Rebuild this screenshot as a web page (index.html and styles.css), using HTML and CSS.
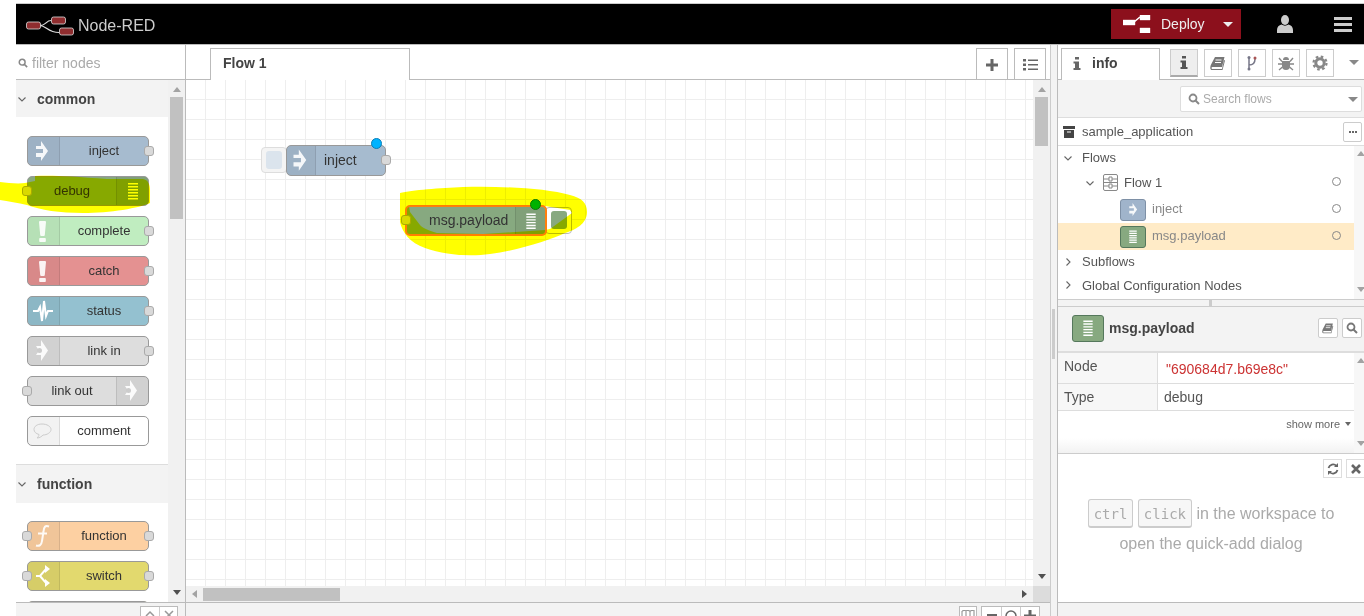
FILE: index.html
```html
<!DOCTYPE html>
<html lang="en">
<head>
    <meta charset="UTF-8">
    <title>Node-RED</title>
    <link rel="stylesheet" href="styles.css">
</head>
<body>
    <svg class="defs" width="0" height="0">
        <symbol id="i-inject" viewBox="0 0 32 28"><path d="M8 9h5V4l7 10-7 10v-4H8v-4h7v-4H8z" fill="#fff" fill-opacity=".9"/></symbol>
        <symbol id="i-debug" viewBox="0 0 32 28"><path d="M11 6h10v1.500H11zM11 9h10v1.500H11zM11 12h10v1.500H11zM11 15h10v1.500H11zM11 18h10v1.500H11zM11 21h10v1.500H11z" fill="#fff"/></symbol>
        <symbol id="i-alert" viewBox="0 0 32 28"><path d="M11 5q0-1 1-1h5q1 0 1 1l-1.200 13q0 1-1 1h-2.600q-1 0-1-1zM12 21h5q.8 0 .8 .8v2.400q0 .8-.8 .8h-5q-.8 0-.8-.8v-2.400q0-.8 .8-.8z" fill="#fff" fill-opacity=".9"/></symbol>
        <symbol id="i-status" viewBox="0 0 32 28"><path d="M5 14h5l2-4 2 14 2-20 2 15 2-5h5" fill="none" stroke="#fff" stroke-width="2"/></symbol>
        <symbol id="i-link" viewBox="0 0 32 28"><path d="M13 3l7 10.500L13 24v-6H8l3-4.500L8 9h5z" fill="#fff" fill-opacity=".9"/><circle cx="11.500" cy="13.500" r="2.500" fill="#ccc"/></symbol>
        <symbol id="i-comment" viewBox="0 0 32 28"><path d="M14 7c5 0 9 2.500 9 5.500S19 18 15 18c-1 1-3 3-6 3 1-1 2-2 2-3.500-3-.8-5-2.700-5-5C6 9.500 9 7 14 7z" fill="none" stroke="#ccc" stroke-width="1"/></symbol>
        <symbol id="i-func" viewBox="0 0 32 28"><path d="M21 4.500c-4-1.500-5 .5-5.500 5L14 19c-.5 4-2.500 5.500-6 4.500M10 11.500h9" fill="none" stroke="#fff" stroke-opacity=".9" stroke-width="2"/></symbol>
        <symbol id="i-switch" viewBox="0 0 32 28"><path d="M8 14h4l6-7h2M12 14l6 7h2" fill="none" stroke="#fff" stroke-width="2"/><path d="M17 3l5 4-5 4zM17 17l5 4-5 4z" fill="#fff"/></symbol>
        <symbol id="i-search" viewBox="0 0 12 12"><circle cx="5" cy="5" r="3.500" fill="none" stroke="currentColor" stroke-width="1.800"/><path d="M7.500 7.500L11 11" stroke="currentColor" stroke-width="2"/></symbol>
        <symbol id="i-book" viewBox="0 0 16 16"><path d="M5 2h9.500l-2.500 10H2.500C1.500 12 1 13 2 14h10l2-9 1 .5L12.500 15H2C0 15 0 12.500 .8 10z" fill="currentColor"/><path d="M5.500 5h6M5 7.500h6" stroke="#fff" stroke-width="1"/></symbol>
        <symbol id="i-chev-down" viewBox="0 0 10 10"><path d="M1.500 3.500L5 7l3.500-3.500" fill="none" stroke="currentColor" stroke-width="1.100"/></symbol>
        <symbol id="i-chev-right" viewBox="0 0 10 10"><path d="M3.500 1.500L7 5 3.500 8.500" fill="none" stroke="currentColor" stroke-width="1.100"/></symbol>
    </svg>

    <div class="app">
        <header class="header">
            <svg class="logo" width="48" height="20" viewBox="0 0 48 20">
                <path d="M14 9.500c6 0 6-5 11-5M14 9.500c6 0 8 7 19 7" fill="none" stroke="#ddd" stroke-width="1.200"/>
                <rect x=".5" y="6" width="14" height="7" rx="2" fill="#8f2d2f" stroke="#ddd" stroke-width=".8"/>
                <rect x="25.500" y="1" width="14" height="7" rx="2" fill="#8f2d2f" stroke="#ddd" stroke-width=".8"/>
                <rect x="33.500" y="12" width="14" height="7" rx="2" fill="#8f2d2f" stroke="#ddd" stroke-width=".8"/>
            </svg>
            <span class="brand">Node-RED</span>
            <div class="header-right">
                <div class="deploy">
                    <svg width="28" height="18" viewBox="0 0 28 18"><path d="M0 5h12v5H0zM17 0h10v5H17zM17 13h10v5H17zM12 6l5-4" fill="#fff" stroke="#fff" stroke-width=".4"/><path d="M11 7l6-5" stroke="#fff" stroke-width="1.500"/></svg>
                    <span class="deploy-label">Deploy</span>
                    <span class="caret caret-light"></span>
                </div>
                <svg class="user" width="16" height="18" viewBox="0 0 16 18"><ellipse cx="8" cy="5" rx="4" ry="5" fill="#ccc"/><path d="M0 18v-3c0-3 2-5 4.500-5.500 2 1.500 5 1.500 7 0C14 10 16 12 16 15v3z" fill="#ccc"/></svg>
                <div class="burger"><i></i><i></i><i></i></div>
            </div>
        </header>

        <div class="main">
            <aside class="palette">
                <div class="filter">
                    <svg class="filter-icon" width="10" height="10"><use href="#i-search"/></svg>
                    <span>filter nodes</span>
                </div>
                <div class="palette-body">
                    <div class="palette-list">
                        <div class="cat-head">
                            <svg width="10" height="10"><use href="#i-chev-down"/></svg>
                            <span>common</span>
                        </div>
                        <div class="cat-nodes">
                            <div class="node c-inject"><span class="pane"><svg width="32" height="28"><use href="#i-inject"/></svg></span><span class="label">inject</span><i class="port port-r"></i></div>
                            <div class="node c-debug"><i class="port port-l"></i><span class="label">debug</span><span class="pane pane-r"><svg width="32" height="28"><use href="#i-debug"/></svg></span></div>
                            <div class="node c-complete"><span class="pane"><svg width="32" height="28"><use href="#i-alert"/></svg></span><span class="label">complete</span><i class="port port-r"></i></div>
                            <div class="node c-catch"><span class="pane"><svg width="32" height="28"><use href="#i-alert"/></svg></span><span class="label">catch</span><i class="port port-r"></i></div>
                            <div class="node c-status"><span class="pane"><svg width="32" height="28"><use href="#i-status"/></svg></span><span class="label">status</span><i class="port port-r"></i></div>
                            <div class="node c-link"><span class="pane"><svg width="32" height="28"><use href="#i-link"/></svg></span><span class="label">link in</span><i class="port port-r"></i></div>
                            <div class="node c-link"><i class="port port-l"></i><span class="label">link out</span><span class="pane pane-r"><svg width="32" height="28"><use href="#i-link"/></svg></span></div>
                            <div class="node c-comment"><span class="pane"><svg width="32" height="28"><use href="#i-comment"/></svg></span><span class="label">comment</span></div>
                        </div>
                        <div class="cat-head cat-ruled">
                            <svg width="10" height="10"><use href="#i-chev-down"/></svg>
                            <span>function</span>
                        </div>
                        <div class="cat-nodes cat-nodes-fn">
                            <div class="node c-function"><i class="port port-l"></i><span class="pane"><svg width="32" height="28"><use href="#i-func"/></svg></span><span class="label">function</span><i class="port port-r"></i></div>
                            <div class="node c-switch"><i class="port port-l"></i><span class="pane"><svg width="32" height="28"><use href="#i-switch"/></svg></span><span class="label">switch</span><i class="port port-r"></i></div>
                            <div class="node c-switch"></div>
                        </div>
                    </div>
                    <div class="vscroll palette-scroll">
                        <i class="arrow arrow-up"></i>
                        <i class="thumb thumb-palette"></i>
                        <span class="grow"></span>
                        <i class="arrow arrow-down"></i>
                    </div>
                </div>
                <div class="bar-foot palette-foot">
                    <div class="mini-group">
                        <span class="mini">
                            <svg width="10" height="8" viewBox="0 0 10 8"><path d="M1 6l4-4 4 4" fill="none" stroke="#999" stroke-width="1.500"/></svg>
                        </span>
                        <span class="mini">
                            <svg width="10" height="8" viewBox="0 0 10 8"><path d="M1 1l8 8M9 1l-8 8" fill="none" stroke="#999" stroke-width="1.500"/></svg>
                        </span>
                    </div>
                </div>
            </aside>

            <section class="workspace">
                <div class="ws-tabs">
                    <div class="ws-tab">Flow 1</div>
                    <div class="ws-actions">
                        <span class="ws-btn"><svg width="12" height="12" viewBox="0 0 12 12"><path d="M4.500 0h3v4.500H12v3H7.500V12h-3V7.500H0v-3h4.500z" fill="#666"/></svg></span>
                        <span class="ws-btn"><svg width="15" height="12" viewBox="0 0 15 12"><path d="M0 0h3v2.500H0zM5 .5h10v1.500H5zM0 4.500h3V7H0zM5 5h10v1.500H5zM0 9h3v2.500H0zM5 9.500h10V11H5z" fill="#666"/></svg></span>
                    </div>
                </div>
                <div class="ws-mid">
                    <div class="ws-col">
                        <div class="canvas">
                            <div class="flow-btn btn-inject"><i></i></div>
                            <div class="flow-node flow-inject">
                                <span class="pane"><svg><use href="#i-inject"/></svg></span>
                                <span class="flow-label">inject</span>
                                <i class="port port-r"></i>
                                <i class="dot dot-blue"></i>
                            </div>
                            <div class="flow-btn btn-debug"><i></i></div>
                            <div class="flow-node flow-debug">
                                <i class="port port-l"></i>
                                <span class="flow-label">msg.payload</span>
                                <span class="pane pane-r"><svg width="30" height="28" viewBox="0 0 32 28"><use href="#i-debug"/></svg></span>
                                <i class="dot dot-green"></i>
                            </div>
                        </div>
                        <div class="hscroll">
                            <i class="arrow arrow-left"></i>
                            <i class="thumb thumb-h"></i>
                            <span class="grow"></span>
                            <i class="arrow arrow-right"></i>
                        </div>
                    </div>
                    <div class="ws-vcol">
                        <div class="vscroll ws-scroll">
                            <i class="arrow arrow-up"></i>
                            <i class="thumb thumb-ws"></i>
                            <span class="grow"></span>
                            <i class="arrow arrow-down"></i>
                        </div>
                        <div class="corner"></div>
                    </div>
                </div>
                <div class="bar-foot ws-foot">
                    <span class="mini mini-map">
                        <svg width="14" height="10" viewBox="0 0 14 10"><path d="M1 1l4-1 4 1 4-1v9H1zM5 0v9M9 1v8" fill="none" stroke="#888"/></svg>
                    </span>
                    <div class="mini-group">
                        <span class="mini"><svg width="10" height="10"><path d="M0 4h10v3H0z" fill="#666"/></svg></span>
                        <span class="mini"><svg width="12" height="12"><circle cx="6" cy="6" r="5" fill="none" stroke="#666" stroke-width="1.500"/></svg></span>
                        <span class="mini"><svg width="12" height="12" viewBox="0 0 12 12"><path d="M4.500 0h3v4.500H12v3H7.500V12h-3V7.500H0v-3h4.500z" fill="#666"/></svg></span>
                    </div>
                </div>
            </section>

            <div class="splitter"><i></i></div>

            <aside class="sidebar">
                <div class="side-tabs">
                    <div class="side-tab">
                        <svg width="8" height="13" viewBox="0 0 8 13"><path d="M2 0h4v2.500H2zM.5 4.500H6V11h1.500v2h-7v-2H2V6.500H.5z" fill="#666"/></svg>
                        <span>info</span>
                    </div>
                    <div class="side-icons">
                        <span class="side-btn side-btn-on"><svg width="8" height="13" viewBox="0 0 8 13"><path d="M2 0h4v2.500H2zM.5 4.500H6V11h1.500v2h-7v-2H2V6.500H.5z" fill="#555"/></svg></span>
                        <span class="side-btn"><svg width="16" height="16"><use href="#i-book"/></svg></span>
                        <span class="side-btn"><svg width="10" height="16" viewBox="0 0 10 16"><path d="M2 3v11M2 10c4 0 6-2 6-6" fill="none" stroke="#778" stroke-width="1.500"/><circle cx="2" cy="2.500" r="1.500" fill="#778"/><circle cx="8" cy="3" r="1.500" fill="#a55"/><circle cx="2" cy="14" r="1.500" fill="#778"/></svg></span>
                        <span class="side-btn"><svg width="16" height="16" viewBox="0 0 16 16"><path d="M5 5a3 3 0 0 1 6 0z" fill="#888"/><path d="M4 6h8v5a4 4 0 0 1-8 0z" fill="#888"/><path d="M1 3l3 3.500M15 3l-3 3.500M0 9h4M12 9h4M1 15l3.500-3M15 15l-3.500-3" stroke="#888" stroke-width="1.400"/></svg></span>
                        <span class="side-btn"><svg width="16" height="16" viewBox="0 0 16 16"><circle cx="8" cy="8" r="4.200" fill="none" stroke="#888" stroke-width="3"/><circle cx="8" cy="8" r="6.500" fill="none" stroke="#888" stroke-width="2.200" stroke-dasharray="2.600 2.500"/></svg></span>
                        <i class="caret caret-side"></i>
                    </div>
                </div>
                <div class="search-row">
                    <div class="search-box">
                        <svg class="search-icon" width="12" height="12"><use href="#i-search"/></svg>
                        <span class="search-text">Search flows</span>
                        <i class="caret caret-search"></i>
                    </div>
                </div>
                <div class="project-row">
                    <svg width="12" height="12" viewBox="0 0 12 12"><path d="M0 0h12v3H0zM1 4h10v8H1z" fill="#444"/><path d="M4 5.500h4v1H4z" fill="#fff"/></svg>
                    <span class="project-name">sample_application</span>
                    <span class="dots-btn"><i></i><i></i><i></i></span>
                </div>
                <div class="tree-wrap">
                    <div class="tree">
                        <div class="tree-row row-top">
                            <svg class="chev" width="10" height="10"><use href="#i-chev-down"/></svg>
                            <span>Flows</span>
                        </div>
                        <div class="tree-row row-flow">
                            <svg class="chev" width="10" height="10"><use href="#i-chev-down"/></svg>
                            <svg class="flow-icon" width="15" height="17" viewBox="0 0 15 17"><rect x=".5" y=".5" width="14" height="16" rx="1.500" fill="#fff" stroke="#888"/><path d="M1 5h5M1 12h5M6 3h3v4H6zM6 10h3v4H6zM9 5h5M9 12h5M1 8.500h13" fill="none" stroke="#888"/></svg>
                            <span>Flow 1</span>
                            <i class="ring"></i>
                        </div>
                        <div class="tree-row row-node">
                            <span class="tree-icon t-inject"><svg class="shift-inject" width="24" height="21"><use href="#i-inject"/></svg></span>
                            <span class="muted">inject</span>
                            <i class="ring"></i>
                        </div>
                        <div class="tree-row row-node row-sel">
                            <span class="tree-icon t-debug"><svg width="24" height="21"><use href="#i-debug"/></svg></span>
                            <span class="muted">msg.payload</span>
                            <i class="ring"></i>
                        </div>
                        <div class="tree-row row-top">
                            <svg class="chev" width="10" height="10"><use href="#i-chev-right"/></svg>
                            <span>Subflows</span>
                        </div>
                        <div class="tree-row row-top row-last">
                            <svg class="chev" width="10" height="10"><use href="#i-chev-right"/></svg>
                            <span>Global Configuration Nodes</span>
                        </div>
                    </div>
                    <div class="side-scroll">
                        <i class="arrow arrow-up"></i>
                        <span class="grow"></span>
                        <i class="arrow arrow-down"></i>
                    </div>
                </div>
                <div class="side-split"><i></i></div>
                <div class="info-head">
                    <span class="info-icon"><svg width="30" height="26"><use href="#i-debug"/></svg></span>
                    <span class="info-title">msg.payload</span>
                    <div class="info-actions">
                        <span class="small-btn"><svg width="12" height="12"><use href="#i-book"/></svg></span>
                        <span class="small-btn"><svg width="12" height="12"><use href="#i-search"/></svg></span>
                    </div>
                </div>
                <div class="info-wrap">
                    <div class="info-body">
                        <div class="info-table">
                            <div class="prop prop-node"><span class="prop-key">Node</span><span class="prop-val val-red">"690684d7.b69e8c"</span></div>
                            <div class="prop prop-type"><span class="prop-key">Type</span><span class="prop-val">debug</span></div>
                        </div>
                        <div class="show-more">show more <i class="caret caret-more"></i></div>
                    </div>
                    <div class="side-scroll">
                        <i class="arrow arrow-up"></i>
                        <span class="grow"></span>
                        <i class="arrow arrow-down"></i>
                    </div>
                </div>
                <div class="tips">
                    <div class="tips-actions">
                        <span class="tip-btn"><svg width="12" height="12" viewBox="0 0 12 12"><path d="M1.500 5a4.700 4.700 0 0 1 8-2M10.500 7a4.700 4.700 0 0 1-8 2" fill="none" stroke="#666" stroke-width="1.800"/><path d="M11 0v4H7zM1 12V8h4z" fill="#666"/></svg></span>
                        <span class="tip-btn"><svg width="10" height="10" viewBox="0 0 10 10"><path d="M1 1l8 8M9 1l-8 8" stroke="#666" stroke-width="2.600"/></svg></span>
                    </div>
                    <p class="tip-text"><kbd>ctrl</kbd> <kbd>click</kbd> in the workspace to<br>open the quick-add dialog</p>
                </div>
                <div class="bar-foot side-foot"></div>
            </aside>
        </div>
    </div>

    <!-- marker scribble over the screenshot -->
    <svg class="paint" width="1364" height="616" viewBox="0 0 1364 616">
        <path d="M0 182C8 183 18 184 25 183L35 181 35 176C50 175 70 176 107 179L143 179C148 180 150 184 150 190L150 203C140 208 110 213 83 213 60 213 40 210 27 205 18 203 8 201 0 200z" fill="#ff0"/>
        <path fill-rule="evenodd" fill="#ff0" d="M400 193C412 190 440 188 463 187 500 186 545 188 570 195 582 198 587 203 587 212 587 224 575 230 565 233 550 240 520 250 490 254 470 257 445 255 425 248 410 243 402 232 400 222zM409 206L545 206 570 210 572 213 550 229 545 230 483 234 437 233C428 230 422 228 420 225L410 212z"/>
    </svg>
</body>
</html>
```

FILE: styles.css
```css
* {
    box-sizing: border-box;
}

html, body {
    margin: 0;
    height: 616px;
    overflow: hidden;
}

body {
    background: white;
    padding: 4px 0 0 16px;
    font-family: "Liberation Sans", Arial, sans-serif;
    color: #555;
    position: relative;
}

i {
    display: block;
    font-style: normal;
}

svg {
    display: block;
}

.defs {
    position: absolute;
}

.grow {
    flex: 1;
}

.app {
    width: 1348px;
    height: 612px;
    display: flex;
    flex-direction: column;
    box-shadow: 0 -1px 0 #ccc;
}

/* header */
.header {
    height: 41px;
    flex: none;
    background: #000;
    border-bottom: 1px solid #bbb;
    display: flex;
    align-items: center;
    padding-left: 10px;
    color: #ccc;
}

.logo {
    margin-top: 4px;
}

.brand {
    font-size: 16px;
    margin-left: 4px;
    position: relative;
    top: 2px;
}

.header-right {
    margin-left: auto;
    display: flex;
    align-items: center;
}

.deploy {
    width: 130px;
    height: 30px;
    background: #8c101c;
    display: flex;
    align-items: center;
    padding-left: 12px;
    color: #eee;
    font-size: 14px;
}

.deploy-label {
    margin-left: 10px;
}

.caret {
    width: 0;
    height: 0;
    border-left: 5px solid transparent;
    border-right: 5px solid transparent;
    border-top: 5px solid #888;
}

.caret-light {
    border-top-color: #eee;
    margin-left: 18px;
}

.user {
    margin-left: 36px;
}

.burger {
    width: 18px;
    margin-left: 41px;
    margin-right: 12px;
    display: flex;
    flex-direction: column;
    gap: 3px;
}

.burger i {
    height: 3px;
    background: #ccc;
}

.main {
    flex: 1;
    display: flex;
    min-height: 0;
}

/* palette */
.palette {
    width: 170px;
    flex: none;
    display: flex;
    flex-direction: column;
    border-right: 1px solid #bbb;
}

.filter {
    height: 35px;
    flex: none;
    border-bottom: 1px solid #bbb;
    display: flex;
    align-items: center;
    padding: 2px 0 0 2px;
    font-size: 14px;
    color: #aaa;
}

.filter-icon {
    color: #888;
    margin-right: 4px;
}

.palette-body {
    flex: 1;
    display: flex;
    min-height: 0;
}

.palette-list {
    width: 152px;
    flex: none;
    overflow: hidden;
}

.cat-head {
    height: 37px;
    background: #f3f3f3;
    display: flex;
    align-items: center;
    padding-left: 1px;
    font-size: 14px;
    font-weight: bold;
    color: #444;
}

.cat-head svg {
    color: #666;
    margin-right: 10px;
}

.cat-ruled {
    height: 39px;
    border-top: 1px solid #ddd;
}

.cat-nodes {
    display: flex;
    flex-direction: column;
    gap: 10px;
    padding: 19px 0 18px 11px;
}

.cat-nodes-fn {
    padding-top: 18px;
}

.vscroll {
    display: flex;
    flex-direction: column;
    align-items: center;
    background: #f1f1f1;
}

.palette-scroll {
    width: 17px;
    flex: none;
}

.arrow {
    width: 0;
    height: 0;
    flex: none;
    border: 4px solid transparent;
}

.arrow-up {
    border-top: 0;
    border-bottom: 5px solid #a3a3a3;
    margin: 7px 0 5px;
}

.arrow-down {
    border-bottom: 0;
    border-top: 5px solid #505050;
    margin: 5px 0 7px;
}

.arrow-left {
    border-left: 0;
    border-right: 5px solid #a3a3a3;
    margin: 0 6px 0 6px;
}

.arrow-right {
    border-right: 0;
    border-left: 5px solid #505050;
    margin: 0 6px 0 5px;
}

.thumb {
    background: #c1c1c1;
}

.thumb-palette {
    width: 13px;
    height: 122px;
}

.thumb-ws {
    width: 13px;
    height: 49px;
}

.thumb-h {
    width: 137px;
    height: 13px;
}

.bar-foot {
    height: 14px;
    flex: none;
    background: #f3f3f3;
    border-top: 1px solid #bbb;
}

.palette-foot {
    display: flex;
    justify-content: flex-end;
    padding: 3px 7px 0 0;
}

.mini-group {
    display: flex;
    height: 24px;
    background: white;
    border: 1px solid #bbb;
}

.mini {
    width: 18px;
    height: 22px;
    display: flex;
    align-items: flex-start;
    justify-content: center;
    padding-top: 3px;
    background: white;
    border-left: 1px solid #ccc;
}

.mini:first-child {
    border-left: 0;
}

/* nodes */
.node {
    position: relative;
    width: 122px;
    height: 30px;
    flex: none;
    display: flex;
    border: 1px solid #999;
    border-radius: 5px;
    color: #333;
    font-size: 13px;
}

.pane {
    width: 32px;
    flex: none;
    background: rgba(0, 0, 0, 0.05);
    border-right: 1px solid rgba(0, 0, 0, 0.1);
    border-radius: 4px 0 0 4px;
}

.pane-r {
    border-right: 0;
    border-left: 1px solid rgba(0, 0, 0, 0.1);
    border-radius: 0 4px 4px 0;
}

.label {
    flex: 1;
    text-align: center;
    line-height: 28px;
}

.port {
    position: absolute;
    top: 9px;
    width: 10px;
    height: 10px;
    background: #d9d9d9;
    border: 1px solid #aaa;
    border-radius: 3px;
}

.port-r {
    right: -6px;
}

.port-l {
    left: -6px;
}

.c-inject { background: #a6bbcf; }
.c-debug { background: #87a980; }
.c-complete { background: #c0edc0; }
.c-catch { background: #e49191; }
.c-status { background: #94c1d0; }
.c-link { background: #ddd; }
.c-comment { background: white; }
.c-function { background: #fdd0a2; }
.c-switch { background: #e2d96e; }

/* workspace */
.workspace {
    width: 864px;
    flex: none;
    display: flex;
    flex-direction: column;
}

.ws-tabs {
    height: 35px;
    flex: none;
    border-bottom: 1px solid #bbb;
    display: flex;
    padding: 3px 4px 0 24px;
}

.ws-tab {
    width: 200px;
    height: 32px;
    background: white;
    border: 1px solid #bbb;
    border-bottom: 0;
    font-size: 14px;
    font-weight: bold;
    color: #444;
    line-height: 28px;
    padding-left: 12px;
}

.ws-actions {
    margin-left: auto;
    display: flex;
    gap: 6px;
}

.ws-btn {
    width: 32px;
    height: 32px;
    border: 1px solid #bbb;
    border-bottom: 0;
    display: flex;
    align-items: center;
    justify-content: center;
}

.ws-mid {
    flex: 1;
    display: flex;
    min-height: 0;
}

.ws-col {
    width: 847px;
    flex: none;
    display: flex;
    flex-direction: column;
}

.canvas {
    position: relative;
    flex: 1;
    background-color: white;
    background-image:
        linear-gradient(to right, transparent 19px, #eee 19px),
        linear-gradient(to bottom, transparent 19px, #eee 19px);
    background-size: 20px 20px;
}

.hscroll {
    height: 16px;
    flex: none;
    background: #f1f1f1;
    display: flex;
    align-items: center;
}

.ws-vcol {
    width: 17px;
    flex: none;
    display: flex;
    flex-direction: column;
}

.ws-scroll {
    flex: 1;
}

.corner {
    height: 16px;
    flex: none;
    background: #dcdcdc;
}

.ws-foot {
    display: flex;
    justify-content: flex-end;
    align-items: flex-start;
    padding: 3px 10px 0 0;
    gap: 4px;
}

.ws-foot .mini {
    width: 19px;
}

.ws-foot .mini-map {
    width: 18px;
    height: 24px;
    border: 1px solid #bbb;
}

/* nodes on the canvas */
.flow-node {
    position: absolute;
    height: 31px;
    display: flex;
    align-items: stretch;
    border: 1px solid #999;
    border-radius: 5px;
    font-size: 14px;
    color: #333;
}

.flow-inject {
    left: 100px;
    top: 65px;
    width: 100px;
    background: #a6bbcf;
}

.flow-inject .pane {
    width: 29px;
    overflow: hidden;
}

.flow-inject .pane svg {
    width: 34px;
    height: 30px;
    margin: -1px 0 0 -2px;
}

.flow-label {
    line-height: 29px;
    padding-left: 8px;
}

.flow-debug {
    left: 219px;
    top: 125px;
    width: 142px;
    background: #87a980;
    border: 2px solid #ff7f0e;
}

.flow-debug .flow-label {
    flex: 1;
    padding-left: 22px;
    line-height: 27px;
}

.flow-debug .pane {
    width: 30px;
}

.flow-debug .port-l {
    left: -6px;
    top: 8px;
}

.flow-btn {
    position: absolute;
    background: #f4f4f4;
    border: 1px solid #ddd;
    border-radius: 4px;
    padding: 3px 4px;
}

.flow-btn i {
    width: 100%;
    height: 100%;
    border-radius: 3px;
}

.btn-inject {
    left: 75px;
    top: 67px;
    width: 26px;
    height: 26px;
}

.btn-inject i {
    background: #dbe4ed;
}

.btn-debug {
    left: 359px;
    top: 127px;
    width: 27px;
    height: 27px;
    padding: 3px 4px 4px 5px;
    background: #fff;
    border-color: #bbb;
}

.btn-debug i {
    background: #87a980;
}

.dot {
    position: absolute;
    width: 11px;
    height: 11px;
    border-radius: 50%;
    border: 1px solid #666;
}

.dot-blue {
    right: 3px;
    top: -8px;
    background: #00b3ff;
    border-color: #0a7fb8;
}

.dot-green {
    right: 4px;
    top: -8px;
    background: #00b300;
    border-color: #0a7a0a;
}

/* splitter */
.splitter {
    width: 8px;
    flex: none;
    background: #f3f3f3;
    border-left: 1px solid #ccc;
    border-right: 1px solid #bbb;
    padding: 264px 2px 0 1px;
}

.splitter i {
    width: 3px;
    height: 50px;
    background: #ccc;
}

/* sidebar */
.sidebar {
    flex: 1;
    min-width: 0;
    display: flex;
    flex-direction: column;
    overflow: hidden;
}

.side-tabs {
    height: 35px;
    flex: none;
    border-bottom: 1px solid #bbb;
    display: flex;
    padding: 3px 0 0 3px;
}

.side-tab {
    width: 99px;
    height: 32px;
    background: white;
    border: 1px solid #bbb;
    border-bottom: 0;
    display: flex;
    align-items: center;
    font-size: 14px;
    font-weight: bold;
    color: #444;
    padding: 0 0 3px 11px;
}

.side-tab span {
    margin-left: 11px;
}

.side-icons {
    display: flex;
    gap: 6px;
    margin-left: 10px;
    padding-top: 1px;
    align-items: flex-start;
}

.side-btn {
    width: 28px;
    height: 28px;
    border: 1px solid #ccc;
    display: flex;
    align-items: center;
    justify-content: center;
    color: #777;
}

.side-btn-on {
    background: #eee;
    border-bottom: 2px solid #aaa;
}

.caret-side {
    margin: 11px 0 0 9px;
}

.search-row {
    height: 38px;
    flex: none;
    background: #f3f3f3;
    border-bottom: 1px solid #ddd;
    padding: 6px 2px 0 122px;
}

.search-box {
    height: 26px;
    background: white;
    border: 1px solid #ddd;
    border-radius: 2px;
    display: flex;
    align-items: center;
    padding: 0 3px 0 7px;
    font-size: 12px;
    color: #aaa;
}

.search-icon {
    color: #888;
    margin-right: 3px;
}

.caret-search {
    margin-left: auto;
}

.project-row {
    height: 28px;
    flex: none;
    border-bottom: 1px solid #ddd;
    display: flex;
    align-items: center;
    padding: 0 2px 0 5px;
    font-size: 13px;
}

.project-name {
    margin-left: 7px;
}

.dots-btn {
    margin-left: auto;
    width: 19px;
    height: 20px;
    border: 1px solid #ccc;
    border-radius: 2px;
    display: flex;
    align-items: center;
    justify-content: center;
    gap: 1px;
}

.dots-btn i {
    width: 2px;
    height: 2px;
    background: #666;
}

.tree-wrap {
    height: 153px;
    flex: none;
    display: flex;
}

.tree {
    width: 296px;
    flex: none;
}

.side-scroll {
    flex: 1;
    display: flex;
    flex-direction: column;
    align-items: flex-end;
    background: #f7f7f7;
}

.side-scroll .arrow {
    margin-left: 0;
    margin-right: -1px;
}

.side-scroll .arrow-up {
    margin-top: 5px;
}

.side-scroll .arrow-down {
    border-top-color: #a3a3a3;
}

.tree-row {
    display: flex;
    align-items: center;
    font-size: 13px;
    position: relative;
}

.row-top {
    height: 23px;
    padding-left: 5px;
}

.row-last {
    height: 24px;
}

.row-top .chev {
    margin-right: 9px;
    color: #666;
}

.row-flow {
    height: 27px;
    padding-left: 27px;
}

.row-flow .chev {
    color: #666;
    margin-right: 6px;
    margin-left: 0;
}

.flow-icon {
    margin: 0 6px 0 2px;
}

.row-node {
    height: 27px;
    padding-left: 62px;
}

.row-sel {
    background: #ffebc7;
}

.tree-icon {
    width: 26px;
    height: 22px;
    border-radius: 3px;
    margin-right: 6px;
    display: flex;
    align-items: center;
    justify-content: center;
}

.shift-inject {
    margin-left: 3px;
}

.t-inject {
    background: #a0b4cb;
    border: 1px solid #7e90a6;
}

.t-debug {
    background: #87a980;
    border: 1px solid #55785c;
}

.muted {
    color: #888;
    padding-bottom: 3px;
}

.ring {
    position: absolute;
    right: 13px;
    top: 50%;
    margin-top: -6px;
    width: 9px;
    height: 9px;
    border: 1px solid #888;
    border-radius: 50%;
}

.side-split {
    height: 8px;
    flex: none;
    background: #f3f3f3;
    border-top: 1px solid #ccc;
    border-bottom: 1px solid #ccc;
    display: flex;
    justify-content: center;
}

.side-split i {
    width: 3px;
    height: 6px;
    background: #ccc;
    margin-right: 1px;
}

.info-head {
    height: 46px;
    flex: none;
    background: #f3f3f3;
    border-bottom: 2px solid #ddd;
    display: flex;
    align-items: center;
    padding: 0 2px 2px 14px;
}

.info-icon {
    width: 32px;
    height: 27px;
    background: #87a980;
    border: 1px solid #55785c;
    border-radius: 3px;
    display: flex;
    align-items: center;
    justify-content: center;
}

.info-title {
    margin-left: 5px;
    font-size: 14px;
    font-weight: bold;
    color: #444;
}

.info-actions {
    margin-left: auto;
    display: flex;
    gap: 4px;
}

.small-btn {
    width: 20px;
    height: 20px;
    background: white;
    border: 1px solid #ccc;
    border-radius: 2px;
    display: flex;
    align-items: center;
    justify-content: center;
    color: #777;
}

.info-wrap {
    height: 101px;
    flex: none;
    display: flex;
    border-bottom: 1px solid #ccc;
}

.info-body {
    width: 296px;
    flex: none;
    background: linear-gradient(to bottom, white 85%, #f2f2f2 100%);
}

.prop {
    display: flex;
    font-size: 14px;
    border-bottom: 1px solid #ddd;
}

.prop-node {
    height: 31px;
}

.prop-type {
    height: 27px;
}

.prop-key {
    width: 100px;
    flex: none;
    padding: 5px 0 0 6px;
    background: #f7f7f7;
    border-right: 1px solid #ddd;
}

.prop-val {
    padding: 5px 0 0 6px;
}

.prop-node .prop-val {
    padding: 8px 0 0 8px;
}

.val-red {
    color: #c33;
}

.show-more {
    font-size: 11px;
    text-align: right;
    padding: 7px 3px 0 0;
    display: flex;
    justify-content: flex-end;
    align-items: center;
    gap: 5px;
    color: #666;
}

.caret-more {
    border-left-width: 3.500px;
    border-right-width: 3.500px;
    border-top: 4px solid #666;
}

.tips {
    flex: 1;
    min-height: 0;
    background: white;
    display: flex;
    flex-direction: column;
}

.tips-actions {
    display: flex;
    justify-content: flex-end;
    gap: 4px;
    margin: 5px -1px 0 0;
}

.tip-btn {
    width: 19px;
    height: 19px;
    border: 1px solid #ddd;
    display: flex;
    align-items: center;
    justify-content: center;
}

.tip-text {
    margin: 21px 0 0;
    font-size: 16px;
    line-height: 30px;
    text-align: center;
    color: #aaa;
}

kbd {
    display: inline-block;
    height: 29px;
    padding: 0 5px;
    font-family: "DejaVu Sans Mono", monospace;
    font-size: 14px;
    line-height: 28px;
    color: #aaa;
    background: #f7f7f7;
    border: 1px solid #ccc;
    border-bottom-width: 2px;
    border-radius: 3px;
    vertical-align: top;
}

/* marker scribble */
.paint {
    position: absolute;
    left: 0;
    top: 0;
    mix-blend-mode: multiply;
    pointer-events: none;
}
```
